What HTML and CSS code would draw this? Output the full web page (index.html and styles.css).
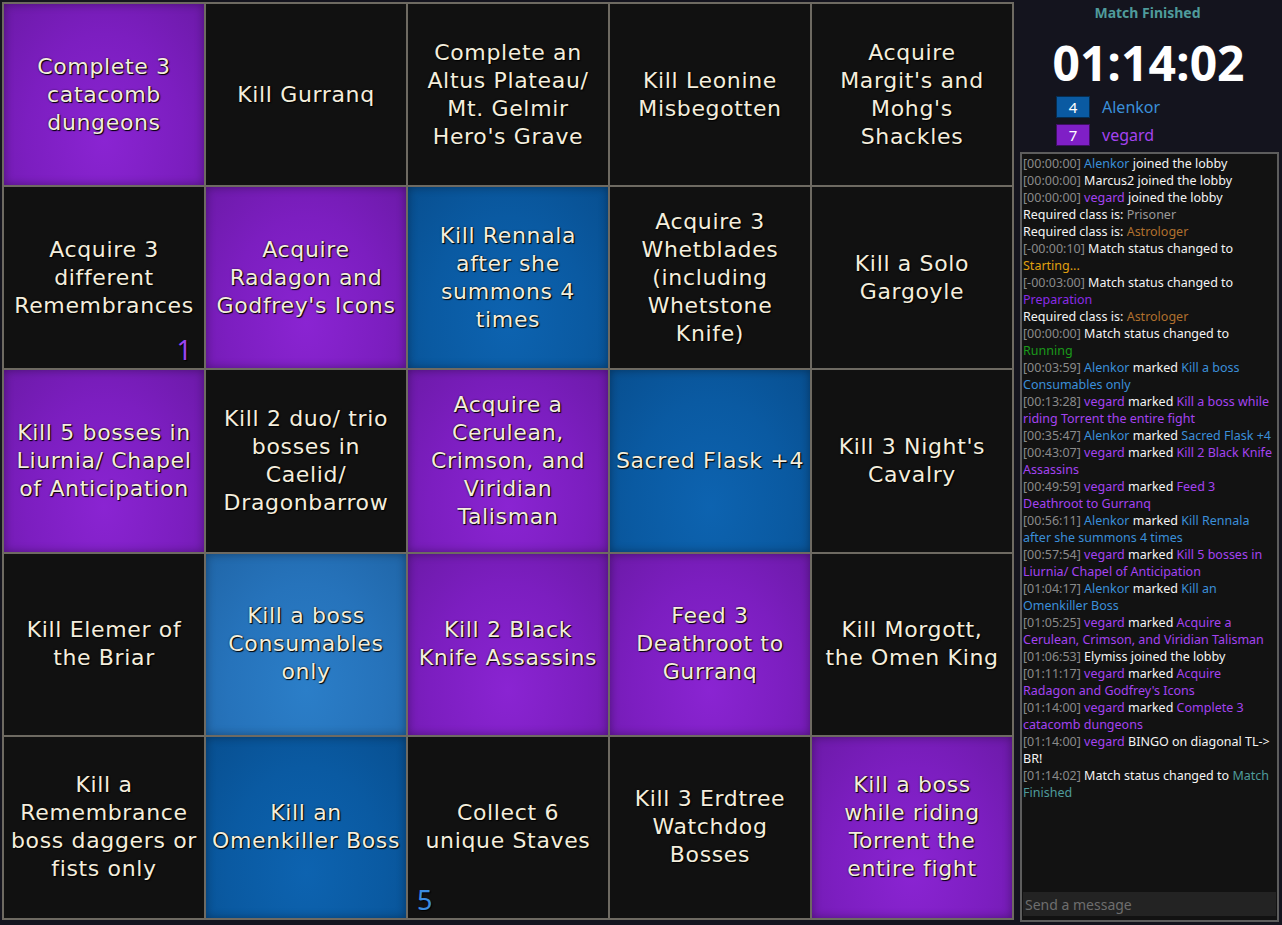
FILE: index.html
```html
<!DOCTYPE html>
<html>
<head>
<meta charset="utf-8">
<link rel="stylesheet" href="styles.css">
</head>
<body>
<div class="board">
  <div class="cell purple"><span>Complete 3<br>catacomb<br>dungeons</span></div>
  <div class="cell"><span>Kill Gurranq</span></div>
  <div class="cell"><span>Complete an<br>Altus Plateau/<br>Mt. Gelmir<br>Hero's Grave</span></div>
  <div class="cell"><span>Kill Leonine<br>Misbegotten</span></div>
  <div class="cell"><span>Acquire<br>Margit's and<br>Mohg's<br>Shackles</span></div>

  <div class="cell"><span>Acquire 3<br>different<br>Remembrances</span><b class="badge br vio">1</b></div>
  <div class="cell purple"><span>Acquire<br>Radagon and<br>Godfrey's Icons</span></div>
  <div class="cell blue"><span>Kill Rennala<br>after she<br>summons 4<br>times</span></div>
  <div class="cell"><span>Acquire 3<br>Whetblades<br>(including<br>Whetstone<br>Knife)</span></div>
  <div class="cell"><span>Kill a Solo<br>Gargoyle</span></div>

  <div class="cell purple"><span>Kill 5 bosses in<br>Liurnia/ Chapel<br>of Anticipation</span></div>
  <div class="cell"><span>Kill 2 duo/ trio<br>bosses in<br>Caelid/<br>Dragonbarrow</span></div>
  <div class="cell purple"><span>Acquire a<br>Cerulean,<br>Crimson, and<br>Viridian<br>Talisman</span></div>
  <div class="cell blue"><span>Sacred Flask +4</span></div>
  <div class="cell"><span>Kill 3 Night's<br>Cavalry</span></div>

  <div class="cell"><span>Kill Elemer of<br>the Briar</span></div>
  <div class="cell light"><span>Kill a boss<br>Consumables<br>only</span></div>
  <div class="cell purple"><span>Kill 2 Black<br>Knife Assassins</span></div>
  <div class="cell purple"><span>Feed 3<br>Deathroot to<br>Gurranq</span></div>
  <div class="cell"><span>Kill Morgott,<br>the Omen King</span></div>

  <div class="cell"><span>Kill a<br>Remembrance<br>boss daggers or<br>fists only</span></div>
  <div class="cell blue"><span>Kill an<br>Omenkiller Boss</span></div>
  <div class="cell"><span>Collect 6<br>unique Staves</span><b class="badge bl azure">5</b></div>
  <div class="cell"><span>Kill 3 Erdtree<br>Watchdog<br>Bosses</span></div>
  <div class="cell purple"><span>Kill a boss<br>while riding<br>Torrent the<br>entire fight</span></div>
</div>

<aside class="side">
  <div class="status">Match Finished</div>
  <div class="timer">01:14:02</div>
  <div class="players">
    <div class="player"><span class="swatch sw-blue">4</span><span class="pname c-blue">Alenkor</span></div>
    <div class="player"><span class="swatch sw-purple">7</span><span class="pname c-purple">vegard</span></div>
  </div>
  <div class="chat">
    <div class="log">
      <p><span class="ts">[00:00:00]</span> <span class="c-blue">Alenkor</span> joined the lobby</p>
      <p><span class="ts">[00:00:00]</span> Marcus2 joined the lobby</p>
      <p><span class="ts">[00:00:00]</span> <span class="c-purple">vegard</span> joined the lobby</p>
      <p>Required class is: <span class="c-gray">Prisoner</span></p>
      <p>Required class is: <span class="c-brown">Astrologer</span></p>
      <p><span class="ts">[-00:00:10]</span> Match status changed to <span class="c-orange">Starting...</span></p>
      <p><span class="ts">[-00:03:00]</span> Match status changed to <span class="c-prep">Preparation</span></p>
      <p>Required class is: <span class="c-brown">Astrologer</span></p>
      <p><span class="ts">[00:00:00]</span> Match status changed to <span class="c-green">Running</span></p>
      <p><span class="ts">[00:03:59]</span> <span class="c-blue">Alenkor</span> marked <span class="c-blue">Kill a boss Consumables only</span></p>
      <p><span class="ts">[00:13:28]</span> <span class="c-purple">vegard</span> marked <span class="c-purple">Kill a boss while riding Torrent the entire fight</span></p>
      <p><span class="ts">[00:35:47]</span> <span class="c-blue">Alenkor</span> marked <span class="c-blue">Sacred Flask +4</span></p>
      <p><span class="ts">[00:43:07]</span> <span class="c-purple">vegard</span> marked <span class="c-purple">Kill 2 Black Knife Assassins</span></p>
      <p><span class="ts">[00:49:59]</span> <span class="c-purple">vegard</span> marked <span class="c-purple">Feed 3 Deathroot to Gurranq</span></p>
      <p><span class="ts">[00:56:11]</span> <span class="c-blue">Alenkor</span> marked <span class="c-blue">Kill Rennala after she summons 4 times</span></p>
      <p><span class="ts">[00:57:54]</span> <span class="c-purple">vegard</span> marked <span class="c-purple">Kill 5 bosses in Liurnia/ Chapel of Anticipation</span></p>
      <p><span class="ts">[01:04:17]</span> <span class="c-blue">Alenkor</span> marked <span class="c-blue">Kill an Omenkiller Boss</span></p>
      <p><span class="ts">[01:05:25]</span> <span class="c-purple">vegard</span> marked <span class="c-purple">Acquire a Cerulean, Crimson, and Viridian Talisman</span></p>
      <p><span class="ts">[01:06:53]</span> Elymiss joined the lobby</p>
      <p><span class="ts">[01:11:17]</span> <span class="c-purple">vegard</span> marked <span class="c-purple">Acquire Radagon and Godfrey's Icons</span></p>
      <p><span class="ts">[01:14:00]</span> <span class="c-purple">vegard</span> marked <span class="c-purple">Complete 3 catacomb dungeons</span></p>
      <p><span class="ts">[01:14:00]</span> <span class="c-purple">vegard</span> BINGO on diagonal TL-&gt; BR!</p>
      <p><span class="ts">[01:14:02]</span> Match status changed to <span class="c-teal">Match Finished</span></p>
    </div>
    <input class="msg" type="text" placeholder="Send a message">
  </div>
</aside>
</body>
</html>
```

FILE: styles.css
```css
html, body {
  margin: 0;
  padding: 0;
  height: 100%;
}
body {
  background: #14141e;
  display: flex;
  padding: 2px 0 0 2px;
  box-sizing: border-box;
  height: 925px;
  overflow: hidden;
}
.board {
  width: 1012px;
  height: 918px;
  box-sizing: border-box;
  display: grid;
  grid-template-columns: repeat(5, 1fr);
  grid-template-rows: repeat(5, 1fr);
  gap: 2px;
  padding: 2px;
  background: #6e6a62;
  flex: none;
}
.cell {
  position: relative;
  background: #111111;
  display: flex;
  align-items: center;
  justify-content: center;
  text-align: center;
  padding: 0 2px;
  white-space: nowrap;
  font-family: "DejaVu Sans", sans-serif;
  font-size: 22px;
  line-height: 28px;
  letter-spacing: 0.65px;
  color: #f4eedd;
  text-shadow: 1px 1px 1px #000, 0 0 2px rgba(0,0,0,0.6);
}
.cell.purple {
  background: radial-gradient(ellipse at 50% 75%, #8a24d2 0%, #7c1ec0 55%, #6c1aa8 100%);
  box-shadow: inset 0 0 10px rgba(0,0,0,0.35);
}
.cell.blue {
  background: radial-gradient(ellipse at 50% 75%, #0d63b0 0%, #0a5aa2 55%, #084f90 100%);
  box-shadow: inset 0 0 10px rgba(0,0,0,0.35);
}
.cell.light {
  background: radial-gradient(ellipse at 50% 75%, #2b7ec8 0%, #2673bb 55%, #2066a8 100%);
  box-shadow: inset 0 0 10px rgba(0,0,0,0.35);
}
.badge {
  position: absolute;
  bottom: 2px;
  font-family: "Noto Sans", sans-serif;
  font-weight: normal;
  font-size: 27px;
  line-height: 32px;
  letter-spacing: 0;
  text-shadow: 1px 1px 1px #000;
}
.badge.br { right: 12px; }
.badge.bl { left: 9px; }
.vio { color: #9d45f0; }
.azure { color: #3b8de0; }

.side {
  width: 259px;
  margin-left: 6px;
  display: flex;
  flex-direction: column;
  font-family: "Noto Sans", "Open Sans", sans-serif;
  height: 920px;
}
.status {
  text-align: center;
  color: #4f9b9b;
  font-weight: bold;
  font-size: 14px;
  line-height: 18px;
  margin-top: 2px;
  margin-left: -4px;
}
.timer {
  text-align: center;
  color: #ffffff;
  font-weight: bold;
  font-size: 48px;
  line-height: 60px;
  margin-top: 11px;
  margin-left: -2px;
  font-family: "Open Sans", "Noto Sans", sans-serif;
}
.players {
  display: flex;
  flex-direction: column;
  gap: 6px;
  margin-left: 36px;
  margin-top: 3px;
}
.player {
  display: flex;
  align-items: center;
  gap: 12px;
}
.swatch {
  width: 32px;
  height: 20px;
  border: 1px solid rgba(0,0,0,0.5);
  color: #fff;
  text-align: center;
  font-size: 15px;
  line-height: 20px;
}
.sw-blue { background: #0a5aa2; }
.sw-purple { background: #7f1fc6; }
.pname {
  font-size: 16px;
  line-height: 22px;
}
.chat {
  margin-top: 6px;
  flex: 1;
  border: 2px solid #5d5d5d;
  background: #121212;
  display: flex;
  flex-direction: column;
  min-height: 0;
}
.log {
  flex: 1;
  padding: 1px 1px 0 1px;
  overflow: hidden;
}
.log p {
  margin: 0;
  font-size: 12.5px;
  line-height: 17px;
  color: #f4f4f4;
  font-family: "Noto Sans", sans-serif;
}
.ts { color: #8a8a8a; }
.c-blue { color: #3b8fd9; }
.c-purple { color: #a443f0; }
.c-gray { color: #9a9a9a; }
.c-brown { color: #b0702e; }
.c-orange { color: #e0a010; }
.c-prep { color: #8a2be6; }
.c-green { color: #1a9a1a; }
.c-teal { color: #4f9b9b; }
.msg {
  height: 24px;
  box-sizing: border-box;
  border: none;
  background: #232323;
  color: #ddd;
  font-family: "Noto Sans", sans-serif;
  font-size: 14px;
  padding: 0 2px;
  margin: 0 1px 4px 1px;
  outline: none;
}
.msg::placeholder { color: #6e6e6e; }
```
